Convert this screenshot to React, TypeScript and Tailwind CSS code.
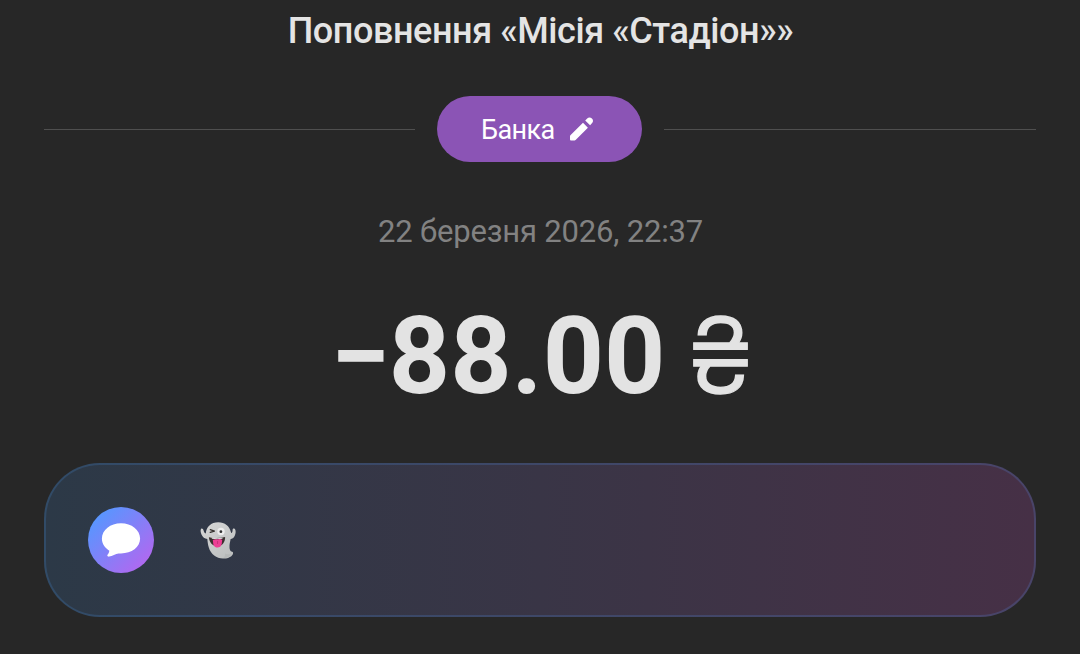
"use client"

function PencilIcon() {
  return (
    <svg viewBox="0 0 24 24" className="ml-[16px] h-6 w-6 shrink-0" fill="#fff">
      <path d="M0 19.200c0-.4.100-.7.400-1L13 5.800l4.900 4.900L5.600 23c-.3.300-.6.400-1 .4H.9c-.5 0-.9-.4-.9-.9Z" />
      <path d="m15.200 3.400 2-2c1.400-1.300 3.300-1.300 4.700.1 1.400 1.400 1.500 3.200.2 4.600l-2 2.200Z" />
    </svg>
  )
}

function ChatIcon() {
  return (
    <svg viewBox="0 0 66 66" className="h-[66px] w-[66px] shrink-0">
      <defs>
        <linearGradient id="chat" x1="8" y1="8" x2="58" y2="58" gradientUnits="userSpaceOnUse">
          <stop offset="0" stopColor="#5697ff" />
          <stop offset="1" stopColor="#b168f0" />
        </linearGradient>
      </defs>
      <circle cx="33" cy="33" r="33" fill="url(#chat)" />
      <path
        fill="#fff"
        d="M33 16.300C22.400 16.300 13.900 23 13.900 31.600c0 5.200 3 9.300 7.400 12.100-.1 1.600-.7 2.700-1.600 3.900-.9 1.100-.2 2.300 1.400 2 3.400-.6 6.300-2.900 9.500-3.200.8.1 1.600.1 2.400.1 10.600 0 19.100-6.300 19.100-14.900S43.600 16.300 33 16.300Z"
      />
    </svg>
  )
}

function GhostIcon() {
  return (
    <svg viewBox="0 0 60 60" className="h-[60px] w-[60px] shrink-0">
      <defs>
        <linearGradient id="ghost" x1="15" y1="12" x2="40" y2="48" gradientUnits="userSpaceOnUse">
          <stop offset="0" stopColor="#d6d6d6" />
          <stop offset="1" stopColor="#bcbfbf" />
        </linearGradient>
      </defs>
      <path
        fill="url(#ghost)"
        d="M28.300 12.200c6.500 0 11.300 4 12.500 9.600l.4 1.300c1.300-.5 1.300-1.800 1.400-3.400.1-1 .8-1.500 1.600-1.200 2 .9 1.800 5.300.3 7.700-1 1.700-2.300 2.600-3.900 2.900-.3 2.300-1 4.400-1.100 6.700-.2 3.600.7 5.700 2.600 5.900 1.100.1 1.300 1.500.6 2.700-1.700 2.900-5.800 4.200-9.900 4.200-6.200 0-12-4.300-14-11-1-3.300-1.200-6-1.500-8.600-2.600-.2-4.600-1.700-5.800-4.500-1-2.300-1.300-4.800-.3-5.700.9-.7 1.900.1 2.300 1.500.4 1.500.8 2.600 2.300 3.200.4-6.500 5.200-11.300 12.500-11.300Z"
      />
      <path fill="#afb3b3" d="M33.500 48c4.300-.2 7-1.900 7.800-4.600-2.300 1.200-4.600 1.100-6.300.2.5 1.600 0 3.200-1.500 4.400Z" opacity=".6" />
      <path d="m20.300 19.600 4.100 1.500-4.200 1.200" fill="none" stroke="#33302d" strokeWidth="1.300" strokeLinecap="round" strokeLinejoin="round" />
      <circle cx="31" cy="21.500" r="3.700" fill="#ededed" />
      <circle cx="30.900" cy="21.700" r="1.400" fill="#303030" />
      <path fill="#3b302f" d="M18.900 27.200c5.500 1.200 10.800 1.200 16.200-.2.300 5-2.900 9.200-7.600 9.300-4.800.1-8.300-4.100-8.600-9.100Z" />
      <path fill="#e0e0e0" d="M21.500 27.700c4 .6 7.800.6 11.300 0l-.5 1c-3.600.6-7 .6-10.300 0Z" />
      <path fill="#ed3f95" d="M22.800 30.100c1.500-1.200 3.400-1.200 4.800-.5 1.400-.7 3.200-.7 4.600.4l-.5 4.100c-.5 2.500-2.200 3.500-4.100 3.500s-3.800-1-4.300-3.400Z" />
      <path d="m27.600 31-.1 3" stroke="#bf2d74" strokeWidth=".8" />
    </svg>
  )
}

export default function App() {
  return (
    <main className="flex h-[654px] w-[1080px] flex-col items-center overflow-hidden bg-[#272727] px-11 font-['Roboto','Noto_Sans',sans-serif]">
      <h1 className="mt-[9px] h-[44px] whitespace-nowrap pl-px text-[36px] font-medium leading-[44px] tracking-[-0.43px] text-[#e4e4e4]">
        Поповнення «Місія «Стадіон»»
      </h1>

      <div className="mt-[43px] flex w-full items-center gap-[22px]">
        <div className="h-px w-[371px] bg-[#4f4f4f]" />
        <button className="flex h-[66px] w-[205px] items-center rounded-full bg-[#8b54b5] pl-[44px] text-[27px] tracking-[-0.6px] text-white">
          <span className="w-[73px] whitespace-nowrap pt-[2px]">Банка</span>
          <PencilIcon />
        </button>
        <div className="h-px flex-1 bg-[#4f4f4f]" />
      </div>

      <p className="mt-[50px] h-[40px] whitespace-nowrap pl-px text-[31px] leading-[40px] tracking-[-0.17px] text-[#828282]">
        22 березня 2026, 22:37
      </p>

      <p className="mt-[42px] flex h-[126px] items-baseline whitespace-nowrap pl-[2px] text-[107px] font-bold leading-[126px] text-[#e3e3e3]">
        <span className="-mr-px">−</span>
        <span>88.00</span>
        <span className="ml-[24px] font-['Inter'] text-[105px] font-light leading-none [-webkit-text-stroke:1.4px_#e3e3e3]">₴</span>
      </p>

      <div className="mt-[43px] h-[154px] w-full rounded-[56px] bg-linear-to-r from-[#314b67] to-[#494469] p-[2px]">
        <div className="flex h-full items-center rounded-[54px] bg-linear-to-r from-[#2c3947] via-[#393546] to-[#463046] pl-[42px]">
          <ChatIcon />
          <div className="ml-[35.5px]">
            <GhostIcon />
          </div>
        </div>
      </div>
    </main>
  )
}
